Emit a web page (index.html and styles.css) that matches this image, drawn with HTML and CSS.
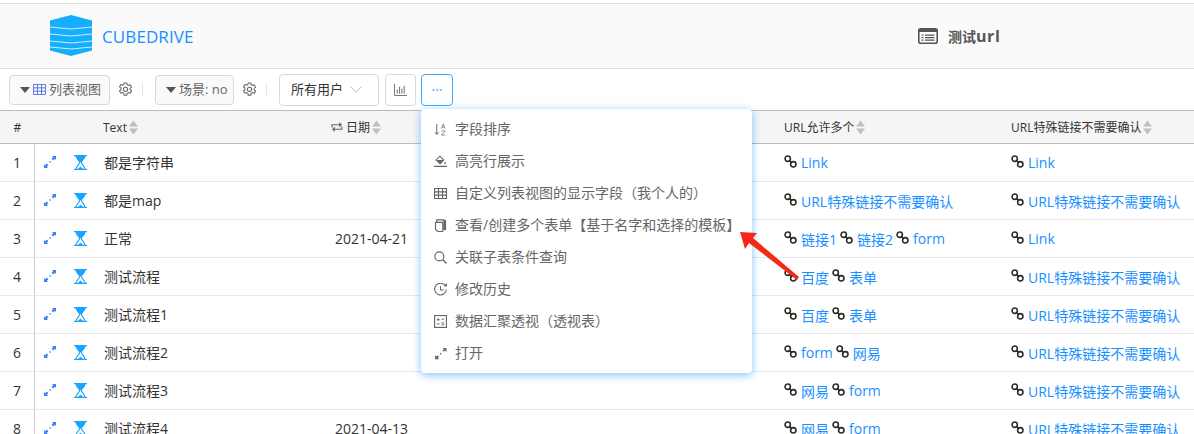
FILE: index.html
```html
<!DOCTYPE html>
<html lang="en">

<head>
    <meta charset="UTF-8">
    <title>CUBEDRIVE</title>
    <link rel="stylesheet" href="styles.css">
</head>

<body>

    <svg class="defs" width="0" height="0">
        <symbol id="i-gear" viewBox="0 0 16 16">
            <path fill="none" stroke="currentColor" stroke-width="1.1" stroke-linejoin="round" d="M6.600 1h2.800l.4 2 1.300.7 1.900-.7 1.400 2.400-1.500 1.300v1.600l1.500 1.300-1.400 2.400-1.900-.7-1.300.7-.4 2H6.600l-.4-2-1.300-.7-1.900.7-1.400-2.400 1.500-1.300V6.400L1.600 5.100 3 2.700l1.900.7 1.300-.7z"/>
            <circle cx="8" cy="7.800" r="2.300" fill="none" stroke="currentColor" stroke-width="1.100"/>
        </symbol>
        <symbol id="i-caret" viewBox="0 0 12 8">
            <path fill="currentColor" d="M1 1h10L6 7z"/>
        </symbol>
        <symbol id="i-grid" viewBox="0 0 14 12">
            <path fill="none" stroke="currentColor" d="M.5.500h13v11H.5zM.5 4.200h13M.5 7.800h13M4.800.500v11M9.200.500v11"/>
        </symbol>
        <symbol id="i-sort" viewBox="0 0 9 15">
            <path fill="currentColor" d="M4.500 0.500L9 6.500H0zM0 8.500h9L4.500 14.500z"/>
        </symbol>
        <symbol id="i-expand" viewBox="0 0 12 12">
            <path fill="currentColor" d="M8 0h4v4l-1.200-1.200-1.600 1.600-1.600-1.600 1.600-1.600zM0 8l1.200 1.200 1.600-1.600 1.600 1.600-1.600 1.600L4 12H0zM5 6l1-1 1 1-1 1z"/>
        </symbol>
        <symbol id="i-hourglass" viewBox="0 0 13 15">
            <path fill="none" stroke="currentColor" stroke-width="1.200" d="M0 .600h13M0 14.400h13M2 .600c0 3.500 3.600 4.800 3.600 6.900S2 11 2 14.400M11 .600c0 3.500-3.600 4.800-3.600 6.900S11 11 11 14.400"/>
            <path fill="currentColor" d="M2 1h9c0 2.500-2.500 4.500-4.500 6.500C4.500 5.500 2 3.500 2 1zM4 14l2.500-2.500L9 14z"/>
        </symbol>
        <symbol id="i-link" viewBox="0 0 14 14">
            <g fill="none" stroke="#2f2a22" stroke-width="1.700">
                <circle cx="4" cy="4" r="2.900"/>
                <circle cx="10" cy="10" r="2.900"/>
                <path d="M5.500 5.500l3 3"/>
            </g>
        </symbol>
    </svg>

    <div class="topbar">
        <div class="brand">
            <svg class="logo" viewBox="0 0 42 41">
                <path fill="#14aefa" d="M0 5.500L21 0l21 5.500v30L21 41 0 35.500z"/>
                <path fill="none" stroke="#c8edff" stroke-width="1.100" d="M0 12l21 2 21-2M0 19l21 2 21-2M0 26l21 2 21-2M0 32l21 2 21-2"/>
            </svg>
            <span class="brand-name">CUBEDRIVE</span>
        </div>
        <div class="page-title">
            <svg class="title-icon" viewBox="0 0 20 16">
                <rect x="0.800" y="0.800" width="18.400" height="14.400" rx="2" fill="#fff" stroke="#555" stroke-width="1.600"/>
                <path fill="#555" d="M1 1h18v3H1zM3.500 6.500h2v1.200h-2zM7 6.500h9.500v1.200H7zM3.500 9h2v1.200h-2zM7 9h9.500v1.200H7zM3.500 11.500h2v1.200h-2zM7 11.500h9.500v1.200H7z"/>
            </svg>
            <span>测试<span class="title-latin">url</span></span>
        </div>
    </div>

    <div class="toolbar">
        <div class="btn btn-view">
            <svg class="btn-caret"><use href="#i-caret"/></svg>
            <svg class="btn-grid"><use href="#i-grid"/></svg>
            <span class="lift">列表视图</span>
        </div>
        <svg class="gear"><use href="#i-gear"/></svg>
        <i class="divider"></i>
        <div class="btn btn-scene">
            <svg class="btn-caret"><use href="#i-caret"/></svg>
            <span class="lift">场景: no</span>
        </div>
        <svg class="gear"><use href="#i-gear"/></svg>
        <i class="divider"></i>
        <div class="select">
            <span class="lift">所有用户</span>
            <svg class="select-arrow" viewBox="0 0 12 7"><path fill="none" stroke="currentColor" d="M.5.500L6 6.300 11.500.500"/></svg>
        </div>
        <div class="icon-btn">
            <svg class="chart" viewBox="0 0 14 14"><path fill="none" stroke="currentColor" d="M.5 1v12.500H14M3.500 7v4.500M6 4v7.500M8.500 6v5.500M11 3v8.500"/></svg>
        </div>
        <div class="icon-btn more">···</div>
    </div>

    <div class="table">
        <div class="row head">
            <div class="cell num">#</div>
            <div class="cell"></div>
            <div class="cell"></div>
            <div class="cell col-text">Text<svg class="sort"><use href="#i-sort"/></svg></div>
            <div class="cell col-date">
                <svg class="retweet" viewBox="0 0 13 11"><path fill="none" stroke="currentColor" stroke-width="1.300" d="M1 6V3h9M11.800 5v3h-9"/><path fill="currentColor" d="M9 0l3 3-3 3zM4 5L1 8l3 3z"/></svg>
                日期<svg class="sort"><use href="#i-sort"/></svg>
            </div>
            <div class="cell">URL允许多个<svg class="sort"><use href="#i-sort"/></svg></div>
            <div class="cell">URL特殊链接不需要确认<svg class="sort"><use href="#i-sort"/></svg></div>
        </div>

        <div class="row">
            <div class="cell num">1</div>
            <div class="cell act"><svg class="expand"><use href="#i-expand"/></svg></div>
            <div class="cell act"><svg class="hourglass"><use href="#i-hourglass"/></svg></div>
            <div class="cell name">都是字符串</div>
            <div class="cell"></div>
            <div class="cell"><svg class="link"><use href="#i-link"/></svg><a>Link</a></div>
            <div class="cell"><svg class="link"><use href="#i-link"/></svg><a>Link</a></div>
        </div>

        <div class="row">
            <div class="cell num">2</div>
            <div class="cell act"><svg class="expand"><use href="#i-expand"/></svg></div>
            <div class="cell act"><svg class="hourglass"><use href="#i-hourglass"/></svg></div>
            <div class="cell name">都是map</div>
            <div class="cell"></div>
            <div class="cell"><svg class="link"><use href="#i-link"/></svg><a>URL特殊链接不需要确认</a></div>
            <div class="cell"><svg class="link"><use href="#i-link"/></svg><a>URL特殊链接不需要确认</a></div>
        </div>

        <div class="row">
            <div class="cell num">3</div>
            <div class="cell act"><svg class="expand"><use href="#i-expand"/></svg></div>
            <div class="cell act"><svg class="hourglass"><use href="#i-hourglass"/></svg></div>
            <div class="cell name">正常</div>
            <div class="cell">2021-04-21</div>
            <div class="cell"><svg class="link"><use href="#i-link"/></svg><a>链接1</a><svg class="link"><use href="#i-link"/></svg><a>链接2</a><svg class="link"><use href="#i-link"/></svg><a>form</a></div>
            <div class="cell"><svg class="link"><use href="#i-link"/></svg><a>Link</a></div>
        </div>

        <div class="row">
            <div class="cell num">4</div>
            <div class="cell act"><svg class="expand"><use href="#i-expand"/></svg></div>
            <div class="cell act"><svg class="hourglass"><use href="#i-hourglass"/></svg></div>
            <div class="cell name">测试流程</div>
            <div class="cell"></div>
            <div class="cell"><svg class="link"><use href="#i-link"/></svg><a>百度</a><svg class="link"><use href="#i-link"/></svg><a>表单</a></div>
            <div class="cell"><svg class="link"><use href="#i-link"/></svg><a>URL特殊链接不需要确认</a></div>
        </div>

        <div class="row">
            <div class="cell num">5</div>
            <div class="cell act"><svg class="expand"><use href="#i-expand"/></svg></div>
            <div class="cell act"><svg class="hourglass"><use href="#i-hourglass"/></svg></div>
            <div class="cell name">测试流程1</div>
            <div class="cell"></div>
            <div class="cell"><svg class="link"><use href="#i-link"/></svg><a>百度</a><svg class="link"><use href="#i-link"/></svg><a>表单</a></div>
            <div class="cell"><svg class="link"><use href="#i-link"/></svg><a>URL特殊链接不需要确认</a></div>
        </div>

        <div class="row">
            <div class="cell num">6</div>
            <div class="cell act"><svg class="expand"><use href="#i-expand"/></svg></div>
            <div class="cell act"><svg class="hourglass"><use href="#i-hourglass"/></svg></div>
            <div class="cell name">测试流程2</div>
            <div class="cell"></div>
            <div class="cell"><svg class="link"><use href="#i-link"/></svg><a>form</a><svg class="link"><use href="#i-link"/></svg><a>网易</a></div>
            <div class="cell"><svg class="link"><use href="#i-link"/></svg><a>URL特殊链接不需要确认</a></div>
        </div>

        <div class="row">
            <div class="cell num">7</div>
            <div class="cell act"><svg class="expand"><use href="#i-expand"/></svg></div>
            <div class="cell act"><svg class="hourglass"><use href="#i-hourglass"/></svg></div>
            <div class="cell name">测试流程3</div>
            <div class="cell"></div>
            <div class="cell"><svg class="link"><use href="#i-link"/></svg><a>网易</a><svg class="link"><use href="#i-link"/></svg><a>form</a></div>
            <div class="cell"><svg class="link"><use href="#i-link"/></svg><a>URL特殊链接不需要确认</a></div>
        </div>

        <div class="row">
            <div class="cell num">8</div>
            <div class="cell act"><svg class="expand"><use href="#i-expand"/></svg></div>
            <div class="cell act"><svg class="hourglass"><use href="#i-hourglass"/></svg></div>
            <div class="cell name">测试流程4</div>
            <div class="cell">2021-04-13</div>
            <div class="cell"><svg class="link"><use href="#i-link"/></svg><a>网易</a><svg class="link"><use href="#i-link"/></svg><a>form</a></div>
            <div class="cell"><svg class="link"><use href="#i-link"/></svg><a>URL特殊链接不需要确认</a></div>
        </div>
    </div>

    <!-- dropdown of the ... button -->
    <div class="menu">
        <div class="menu-item">
            <svg viewBox="0 0 14 14"><path fill="none" stroke="currentColor" d="M3 1v11M1 10l2 2.500L5 10"/><path fill="none" stroke="currentColor" stroke-width=".8" d="M8 6l2-5 2 5M8.800 4.400h2.400M8 8.500h4L8 13h4"/></svg>
            <span>字段排序</span>
        </div>
        <div class="menu-item">
            <svg viewBox="0 0 14 14"><path fill="none" stroke="currentColor" stroke-width="1.100" d="M6.300 1.200l4.200 4.200-4 4-4.200-4z"/><path fill="currentColor" d="M2.300 5.400h8.200l-4 4zM12 7l1 1.800a1 1 0 0 1-2 0zM0 11.500h14V13H0z"/></svg>
            <span>高亮行展示</span>
        </div>
        <div class="menu-item">
            <svg viewBox="0 0 14 12"><path fill="none" stroke="currentColor" stroke-width="1.200" d="M.6.600h12.800v10.800H.6zM.6 4.200h12.800M.6 7.800h12.800M4.800.600v10.800M9.200.600v10.800"/></svg>
            <span>自定义列表视图的显示字段（我个人的）</span>
        </div>
        <div class="menu-item">
            <svg viewBox="0 0 14 14"><path fill="currentColor" d="M10 1h3v11h-3z"/><path fill="none" stroke="currentColor" stroke-width="1.200" d="M3 3V1h8M1.600 3.600h7.800v9.800H4L1.600 11z"/></svg>
            <span>查看/创建多个表单【基于名字和选择的模板】</span>
        </div>
        <div class="menu-item">
            <svg viewBox="0 0 14 14"><circle cx="5.800" cy="5.800" r="4.800" fill="none" stroke="currentColor" stroke-width="1.300"/><path stroke="currentColor" stroke-width="1.500" d="M9.200 9.200l4.300 4.300"/></svg>
            <span>关联子表条件查询</span>
        </div>
        <div class="menu-item">
            <svg viewBox="0 0 14 14"><path fill="none" stroke="currentColor" stroke-width="1.200" d="M12.500 3.500A6.300 6.300 0 1 0 13.300 7M7 3.500V7.500h3.500"/><path fill="currentColor" d="M10.500 3.500h3.500V0z"/></svg>
            <span>修改历史</span>
        </div>
        <div class="menu-item">
            <svg viewBox="0 0 14 14"><rect x="0.600" y="0.600" width="12.800" height="12.800" fill="none" stroke="currentColor" stroke-width="1.200"/><path stroke="currentColor" d="M3 5h3M4.500 3.500v3M8 4.500h3M3 9.500h3M8 8.500h3M8 10.500h3"/></svg>
            <span>数据汇聚透视（透视表）</span>
        </div>
        <div class="menu-item">
            <svg viewBox="0 0 12 12"><path fill="currentColor" d="M8 1h3.500v3.500L10.200 3.200 9 4.400 7.800 3.200 9.200 2zM1 7.500L2.300 8.800 3.500 7.600 4.700 8.800 3.500 10 4.800 11.300H1zM5.200 6.300l1-1 .9.900-1 1z"/></svg>
            <span>打开</span>
        </div>
    </div>

    <svg class="red-arrow" viewBox="0 0 62 50"><path fill="#f42a16" d="M1 1l17 1-4 5 46 39-2 3-48-37-4 6z"/></svg>

</body>

</html>
```

FILE: styles.css
```css
html,
body {
    height: 434px;
    overflow: hidden;
}

body {
    margin: 0;
    padding-top: 3px;
    box-sizing: border-box;
    font-family: 'Open Sans', 'Noto Sans CJK SC', sans-serif;
    font-size: 14px;
    color: #333;
    background-color: #fff;
    position: relative;
}

.defs {
    position: absolute;
}

.topbar {
    height: 64px;
    display: flex;
    align-items: center;
    background-color: #fafafa;
    border-top: 1px solid #ddd;
    border-bottom: 1px solid #ddd;
}

.brand {
    width: 868px;
    padding-left: 50px;
    display: flex;
    align-items: center;
}

.logo {
    width: 42px;
    height: 41px;
    margin-bottom: 2px;
}

.brand-name {
    margin-left: 10px;
    font-size: 17px;
    letter-spacing: 0.1px;
    color: #1890ff;
}

.page-title {
    display: flex;
    align-items: center;
    font-weight: 700;
    color: #555;
}

.title-latin {
    font-size: 16px;
    letter-spacing: 0.6px;
}

.title-icon {
    width: 20px;
    height: 16px;
    margin-right: 10px;
}

.toolbar {
    height: 41px;
    padding-left: 9px;
    display: flex;
    align-items: center;
    font-size: 13px;
}

.lift {
    padding-bottom: 2px;
}

.btn {
    height: 30px;
    box-sizing: border-box;
    display: flex;
    align-items: center;
    background-color: #fafafa;
    border: 1px solid #d9d9d9;
    border-radius: 4px;
    color: #666;
}

.btn-view {
    width: 101px;
    padding-left: 9px;
}

.btn-scene {
    width: 79px;
    padding-left: 9px;
}

.btn-caret {
    width: 12px;
    height: 8px;
    color: #555;
    margin-right: 2px;
}

.btn-scene .btn-caret {
    margin-right: 2px;
}

.btn-grid {
    width: 13px;
    height: 11px;
    margin-right: 3px;
    color: #4a6fe0;
}

.gear {
    width: 15px;
    height: 15px;
    margin-left: 8px;
    color: #666;
}

.divider {
    width: 1px;
    height: 14px;
    margin: 0 12px 0 9px;
    background-color: #e4e4e4;
}

.select {
    width: 100px;
    height: 32px;
    box-sizing: border-box;
    padding: 0 11px;
    margin-right: 6px;
    display: flex;
    align-items: center;
    justify-content: space-between;
    border: 1px solid #d9d9d9;
    border-radius: 4px;
}

.select-arrow {
    width: 12px;
    height: 7px;
    margin-right: 5px;
    color: #bbb;
}

.icon-btn {
    width: 31px;
    height: 32px;
    box-sizing: border-box;
    margin-right: 5px;
    display: flex;
    align-items: center;
    justify-content: center;
    border: 1px solid #d9d9d9;
    border-radius: 4px;
}

.chart {
    width: 13px;
    height: 13px;
    color: #666;
}

.more {
    width: 32px;
    border-color: #40a9ff;
    color: #40a9ff;
    font-size: 14px;
}

.table {
    border-top: 1px solid #bbb;
}

.row {
    height: 38px;
    box-sizing: border-box;
    display: grid;
    grid-template-columns: 35px 30px 30px 231px 449px 227px 192px;
    border-bottom: 1px solid #e8e8e8;
}

.row.head {
    height: 33px;
    background-color: #f5f5f5;
    border-bottom: 1px solid #bbb;
    font-size: 12px;
}

.cell {
    padding-left: 9px;
    display: flex;
    align-items: center;
    white-space: nowrap;
}

.name {
    padding-bottom: 2px;
}

.num {
    padding-left: 0;
    justify-content: center;
    border-right: 1px solid #ccc;
}

.head .num {
    border-right: 0;
}

.head .col-text {
    padding-left: 8px;
}

.head .col-date {
    padding-left: 5px;
}

.act {
    padding-left: 0;
    justify-content: center;
}

.sort {
    width: 9px;
    height: 15px;
    margin-left: 2px;
    color: #bfbfbf;
}

.retweet {
    width: 12px;
    height: 10px;
    margin-right: 3px;
    color: #666;
}

.expand {
    width: 12px;
    height: 12px;
    color: #3b82f6;
    margin-bottom: 1px;
}

.hourglass {
    width: 13px;
    height: 15px;
    color: #1aa3ff;
    margin-bottom: 1px;
}

.link {
    width: 13px;
    height: 13px;
    margin-right: 4px;
    margin-bottom: 2px;
}

.cell a {
    color: #1890ff;
    margin-right: 3px;
}

/* floats over the table */
.menu {
    position: absolute;
    left: 421px;
    top: 109px;
    width: 331px;
    padding: 4px 0;
    box-sizing: border-box;
    background-color: #fff;
    border-radius: 4px;
    box-shadow: 0 2px 8px rgba(24, 144, 255, 0.55);
}

.menu-item {
    height: 32px;
    padding-left: 13px;
    display: flex;
    align-items: center;
    color: #666;
}

.menu-item span {
    padding-bottom: 2px;
}

.menu-item svg {
    width: 13px;
    height: 13px;
    margin-right: 8px;
    flex: none;
}

.red-arrow {
    position: absolute;
    left: 739px;
    top: 231px;
    width: 62px;
    height: 50px;
}
```
